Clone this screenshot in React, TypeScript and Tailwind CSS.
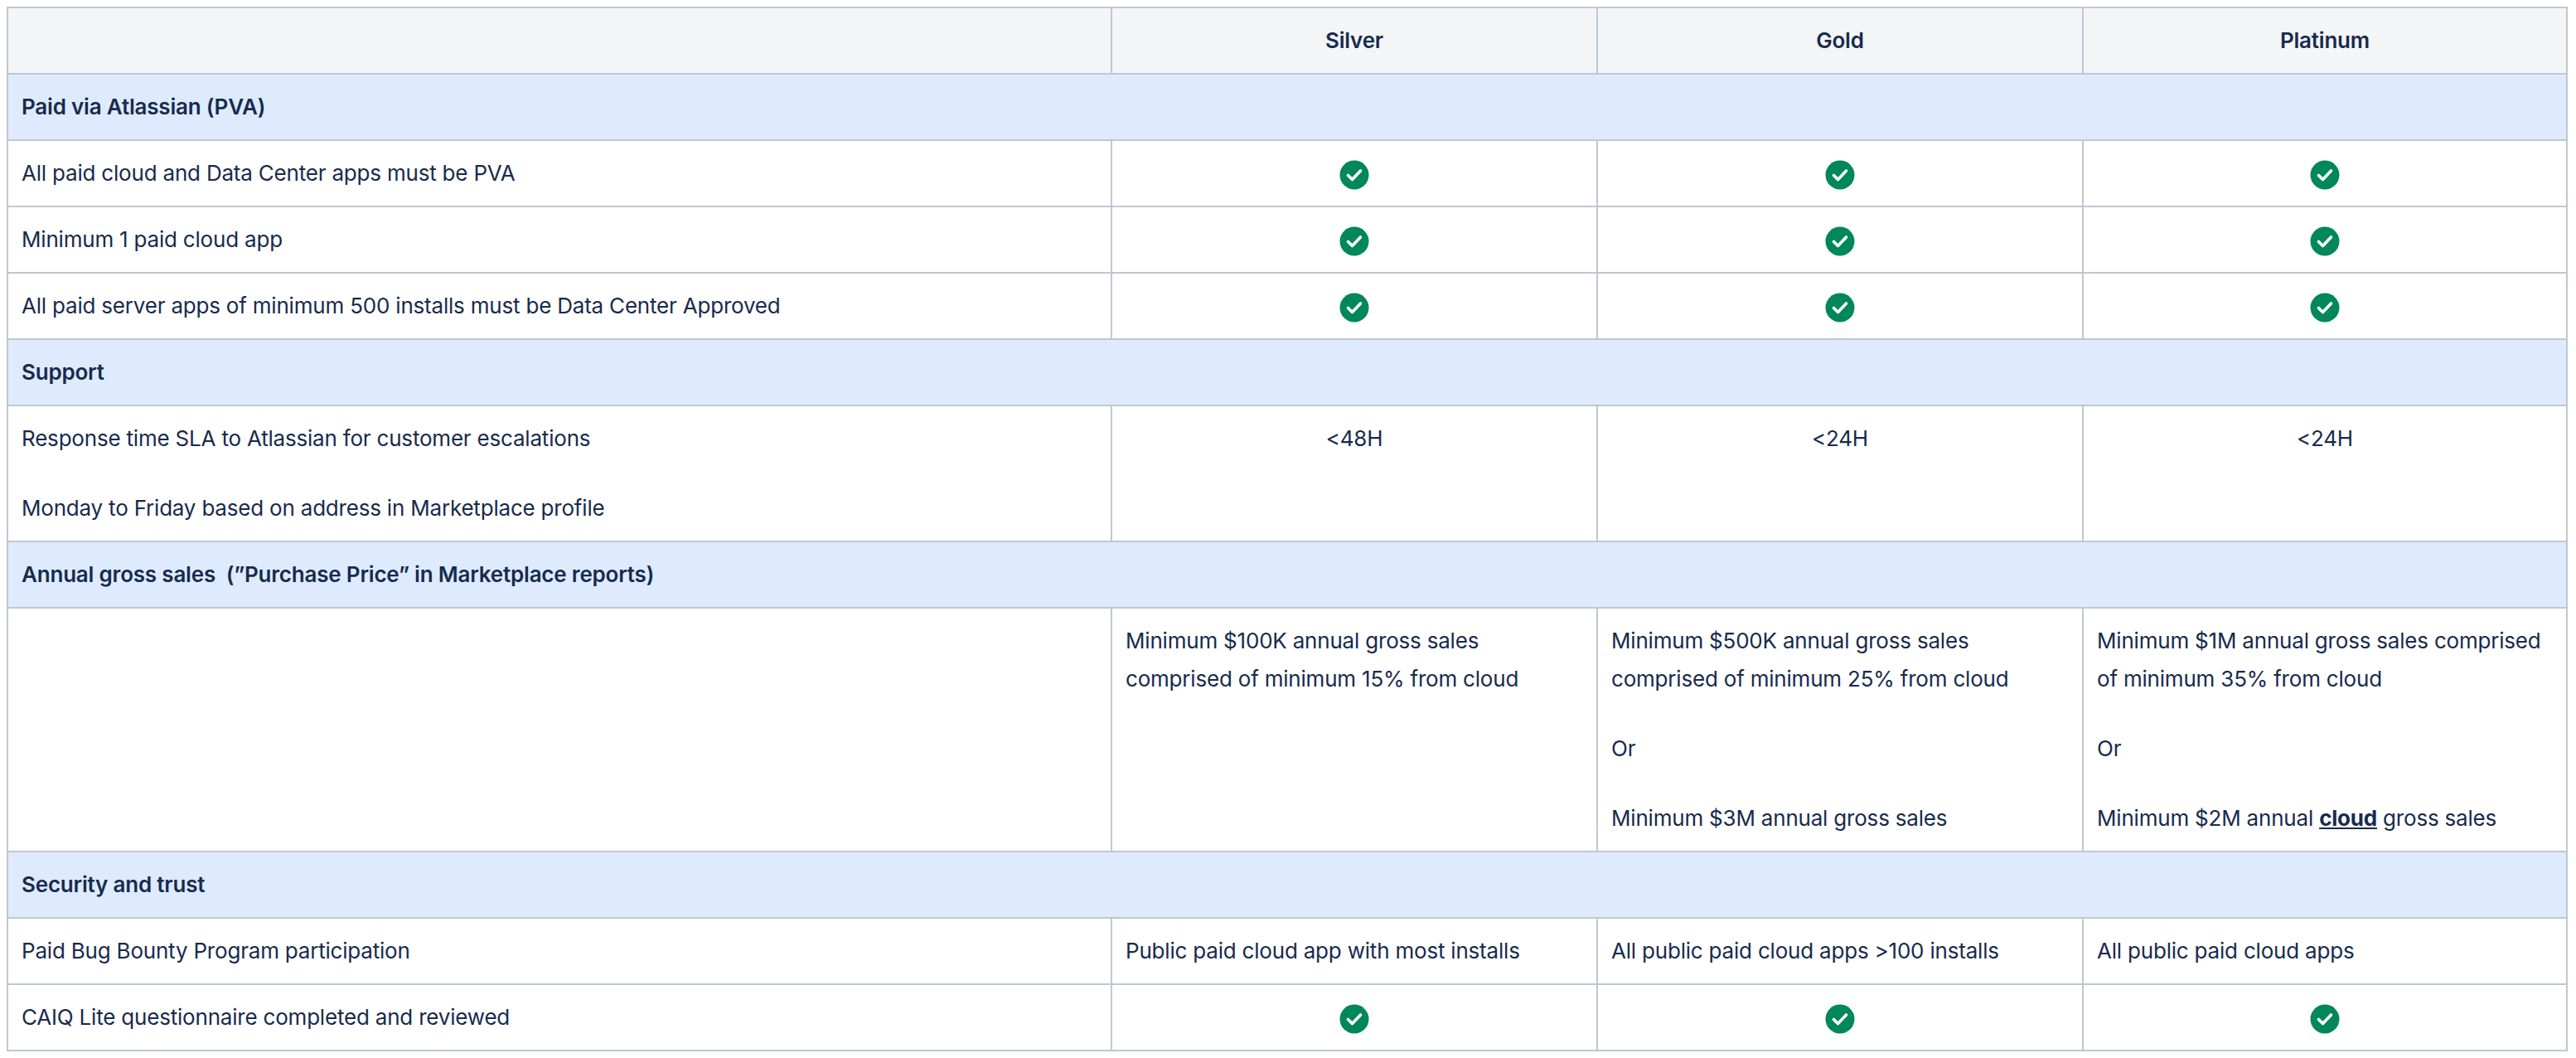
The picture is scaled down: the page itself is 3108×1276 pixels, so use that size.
import React from "react";

const Check = () => (
  <svg width="40" height="40" viewBox="0 0 24 24" className="inline-block align-middle">
    <circle cx="12" cy="12" r="10.5" fill="#00875a" />
    <path d="M7.5 12.3l3 3 6-6.3" fill="none" stroke="#fff" strokeWidth="2.2" strokeLinecap="round" strokeLinejoin="round" />
  </svg>
);

const td = "border-2 border-[#c1c7d0] px-[16px] py-[16px] align-top";
const Section = ({ children }: { children: React.ReactNode }) => (
  <tr className="bg-[#deebff]">
    <td colSpan={4} className={td + " font-semibold align-middle"}>{children}</td>
  </tr>
);
const CheckRow = ({ label }: { label: string }) => (
  <tr>
    <td className={td + " align-middle"}>{label}</td>
    {[0, 1, 2].map((i) => (
      <td key={i} className={td + " text-center align-middle"}><Check /></td>
    ))}
  </tr>
);

export default function App() {
  return (
    <div className="bg-white p-[8px] text-[#172b4d] text-[26px] leading-[46px]" style={{ fontFamily: "Inter, 'Noto Sans', sans-serif" }}>
      <table className="border-collapse w-[3088px] table-fixed tracking-[-0.2px]">
        <colgroup>
          <col className="w-[1332px]" />
          <col className="w-[586px]" />
          <col className="w-[586px]" />
          <col className="w-[584px]" />
        </colgroup>
        <tbody>
          <tr className="bg-[#f4f5f7]">
            <td className={td} />
            <td className={td + " text-center font-semibold align-middle"}>Silver</td>
            <td className={td + " text-center font-semibold align-middle"}>Gold</td>
            <td className={td + " text-center font-semibold align-middle"}>Platinum</td>
          </tr>
          <Section>Paid via Atlassian (PVA)</Section>
          <CheckRow label="All paid cloud and Data Center apps must be PVA" />
          <CheckRow label="Minimum 1 paid cloud app" />
          <CheckRow label="All paid server apps of minimum 500 installs must be Data Center Approved" />
          <Section>Support</Section>
          <tr>
            <td className={td}>
              <p className="mb-[38px]">Response time SLA to Atlassian for customer escalations</p>
              <p>Monday to Friday based on address in Marketplace profile</p>
            </td>
            <td className={td + " text-center"}>&lt;48H</td>
            <td className={td + " text-center"}>&lt;24H</td>
            <td className={td + " text-center"}>&lt;24H</td>
          </tr>
          <Section>Annual gross sales&nbsp; (”Purchase Price” in Marketplace reports)</Section>
          <tr>
            <td className={td} />
            <td className={td}>
              <p>Minimum $100K annual gross sales comprised of minimum 15% from cloud</p>
            </td>
            <td className={td}>
              <p className="mb-[38px]">Minimum $500K annual gross sales comprised of minimum 25% from cloud</p>
              <p className="mb-[38px]">Or</p>
              <p>Minimum $3M annual gross sales</p>
            </td>
            <td className={td}>
              <p className="mb-[38px]">Minimum $1M annual gross sales comprised of minimum 35% from cloud</p>
              <p className="mb-[38px]">Or</p>
              <p>Minimum $2M annual <b className="underline">cloud</b> gross sales</p>
            </td>
          </tr>
          <Section>Security and trust</Section>
          <tr>
            <td className={td + " align-middle"}>Paid Bug Bounty Program participation</td>
            <td className={td + " align-middle"}>Public paid cloud app with most installs</td>
            <td className={td + " align-middle"}>All public paid cloud apps &gt;100 installs</td>
            <td className={td + " align-middle"}>All public paid cloud apps</td>
          </tr>
          <CheckRow label="CAIQ Lite questionnaire completed and reviewed" />
        </tbody>
      </table>
    </div>
  );
}
